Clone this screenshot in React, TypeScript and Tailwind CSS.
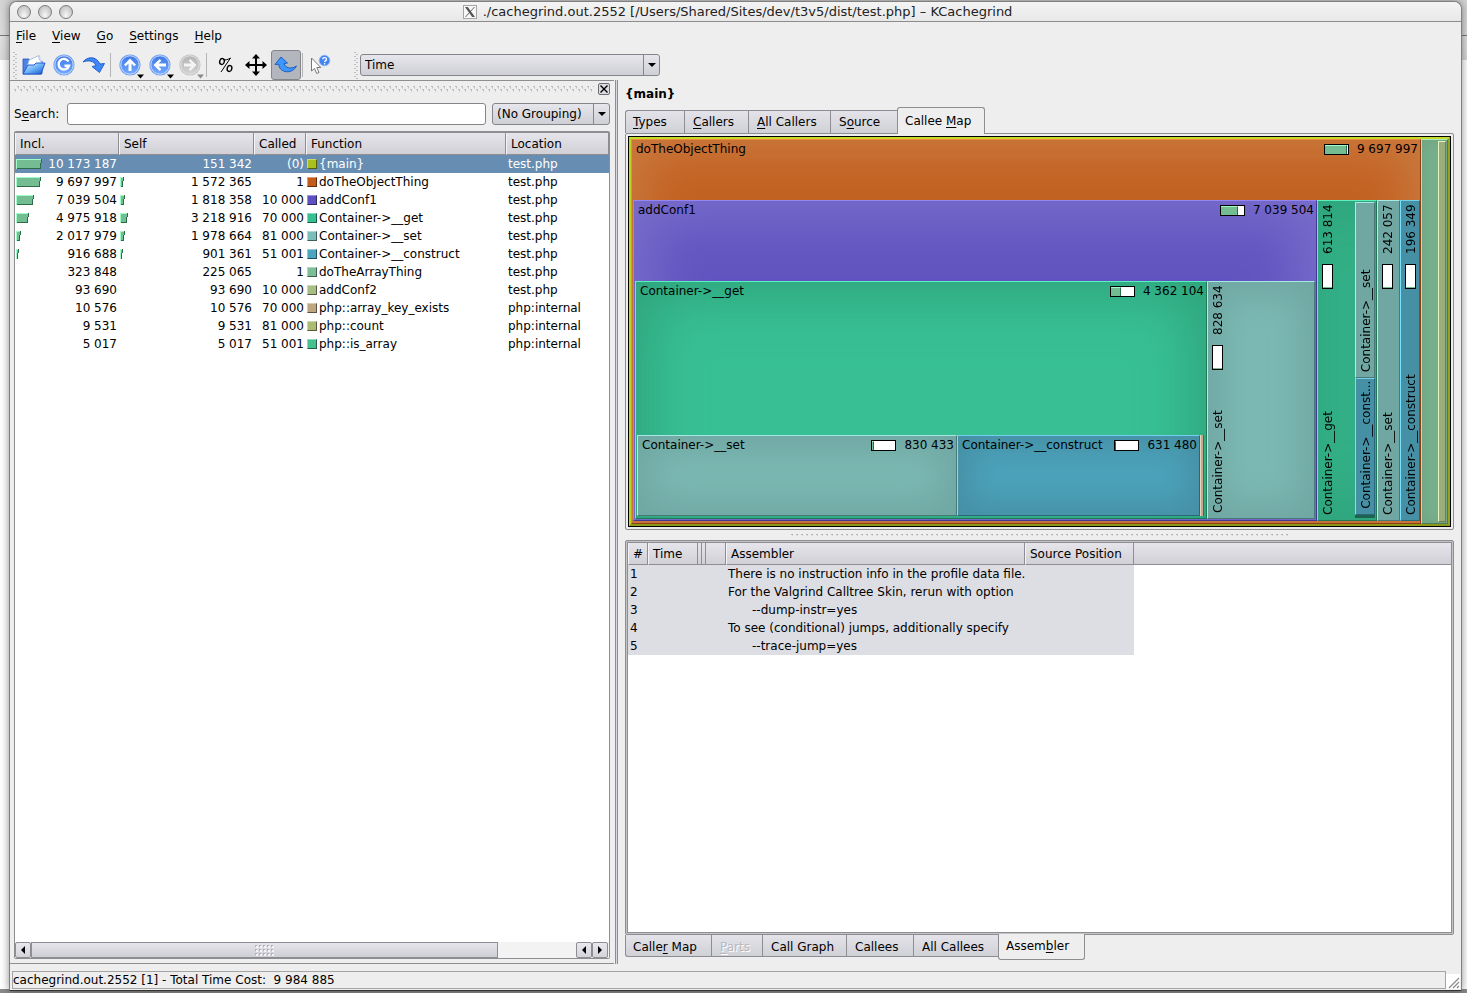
import React, { ReactNode } from "react";

/* ---------- small building blocks ---------- */

function Key({ text, k }: { text: string; k: number }) {
  return (
    <span className="whitespace-pre">
      {text.slice(0, k)}
      <span className="underline underline-offset-2">{text[k]}</span>
      {text.slice(k + 1)}
    </span>
  );
}

function Grip() {
  return (
    <svg className="h-7 w-1 shrink-0" viewBox="0 0 4 28" aria-hidden="true">
      {[1, 5, 9, 13, 17, 21, 25].map((y) => (
        <g key={y}>
          <rect x="0" y={y} width="2" height="1" fill="#bdbdbd" />
          <rect x="2" y={y + 2} width="2" height="1" fill="#bdbdbd" />
        </g>
      ))}
    </svg>
  );
}

function Divider() {
  return <div className="mx-px h-6 w-px shrink-0 border-r border-[#b4b4b4]" />;
}

function ToolButton({
  label,
  children,
  active = false,
  disabled = false,
}: {
  label: string;
  children: ReactNode;
  active?: boolean;
  disabled?: boolean;
}) {
  return (
    <button
      type="button"
      aria-label={label}
      disabled={disabled}
      className={
        active
          ? "flex h-[30px] w-[30px] shrink-0 items-center justify-center rounded-[3px] border border-[#85868c] bg-[#b4b6bd]"
          : "flex h-[30px] w-[30px] shrink-0 items-center justify-center"
      }
    >
      {children}
    </button>
  );
}

function Ball({
  children,
  gray = false,
  menu = false,
}: {
  children: ReactNode;
  gray?: boolean;
  menu?: boolean;
}) {
  const id = gray ? "ballGray" : "ballBlue";
  return (
    <svg width="30" height="30" viewBox="0 0 30 30" aria-hidden="true">
      <defs>
        <linearGradient id={id} x1="0" y1="0" x2="0" y2="1">
          <stop offset="0" stopColor={gray ? "#b4b4b4" : "#3d78e8"} />
          <stop offset="1" stopColor={gray ? "#d2d2d2" : "#74aaff"} />
        </linearGradient>
      </defs>
      <circle cx="15" cy="15" r="10.6" fill={gray ? "#c4c4c4" : "#6f9df0"} />
      <circle cx="15" cy="15" r="9.2" fill={`url(#${id})`} stroke={gray ? "#e2e2e2" : "#c8dcff"} strokeWidth="1" />
      {children}
      {menu && <path d="M22 24.500h7l-3.500 4z" fill={gray ? "#8a8a8a" : "#000"} />}
    </svg>
  );
}

const headCell =
  "border-r border-b border-r-[#8e8e92] border-b-[#8e8e92] border-l border-l-[#f4f4f8] bg-linear-to-b from-[#e5e5eb] to-[#d0d0d6] p-0 pl-1 text-left font-normal";

/* ---------- function list ---------- */

type Fn = {
  incl: string;
  self: string;
  called: string;
  name: string;
  loc: string;
  color: string;
  ib: number;
  sb: number;
};

const functions: Fn[] = [
  { incl: "10 173 187", self: "151 342", called: "(0)", name: "{main}", loc: "test.php", color: "#a8bf1e", ib: 26, sb: 0 },
  { incl: "9 697 997", self: "1 572 365", called: "1", name: "doTheObjectThing", loc: "test.php", color: "#c35c18", ib: 25, sb: 4 },
  { incl: "7 039 504", self: "1 818 358", called: "10 000", name: "addConf1", loc: "test.php", color: "#5f50c2", ib: 18, sb: 5 },
  { incl: "4 975 918", self: "3 218 916", called: "70 000", name: "Container->__get", loc: "test.php", color: "#37be91", ib: 13, sb: 8 },
  { incl: "2 017 979", self: "1 978 664", called: "81 000", name: "Container->__set", loc: "test.php", color: "#7dbebb", ib: 5, sb: 5 },
  { incl: "916 688", self: "901 361", called: "51 001", name: "Container->__construct", loc: "test.php", color: "#4ba5bf", ib: 3, sb: 3 },
  { incl: "323 848", self: "225 065", called: "1", name: "doTheArrayThing", loc: "test.php", color: "#7dbd97", ib: 0, sb: 0 },
  { incl: "93 690", self: "93 690", called: "10 000", name: "addConf2", loc: "test.php", color: "#a9bd87", ib: 0, sb: 0 },
  { incl: "10 576", self: "10 576", called: "70 000", name: "php::array_key_exists", loc: "php:internal", color: "#bfa581", ib: 0, sb: 0 },
  { incl: "9 531", self: "9 531", called: "81 000", name: "php::count", loc: "php:internal", color: "#abbb73", ib: 0, sb: 0 },
  { incl: "5 017", self: "5 017", called: "51 001", name: "php::is_array", loc: "php:internal", color: "#46c08f", ib: 0, sb: 0 },
];

function CostBar({ w }: { w: number }) {
  if (w === 0) return <span />;
  return (
    <svg width={w} height="10" viewBox={`0 0 ${w} 10`} className="shrink-0" aria-hidden="true">
      <path d={`M0 0H${w}V4H${w - 1}V10H0Z`} fill="#74bd93" />
      <path d={`M0 9.5H${w - 1}M${w - 0.5} 0V4M${w - 1.5} 4V10`} stroke="#2f6b4a" strokeWidth="1" fill="none" />
      <path d={`M0 .5H${w - 1}M.5 0V10`} stroke="#9ffcc8" strokeWidth="1" fill="none" />
    </svg>
  );
}

function CostCell({ value, bar }: { value: string; bar: number }) {
  return (
    <td className="p-0">
      <div className="flex items-center justify-between pr-0.5 pl-px">
        <CostBar w={bar} />
        <span>{value}</span>
      </div>
    </td>
  );
}

function FunctionTable() {
  return (
    <table className="w-full table-fixed border-separate border-spacing-0">
      <colgroup>
        <col className="w-[104px]" />
        <col className="w-[135px]" />
        <col className="w-[52px]" />
        <col className="w-[200px]" />
        <col />
      </colgroup>
      <thead>
        <tr className="h-[22px]">
          {["Incl.", "Self", "Called", "Function", "Location"].map((h) => (
            <th key={h} scope="col" className={headCell}>
              {h}
            </th>
          ))}
        </tr>
      </thead>
      <tbody>
        {functions.map((f, i) => (
          <tr key={f.name} className={i === 0 ? "h-[18px] bg-[#678db2] text-white" : "h-[18px]"}>
            <CostCell value={f.incl} bar={f.ib} />
            <CostCell value={f.self} bar={f.sb} />
            <td className="p-0 pr-0.5 text-right">{f.called}</td>
            <td className="p-0">
              <div className="flex items-center gap-0.5 pl-px">
                <span
                  className="h-[10px] w-[10px] shrink-0 border border-t-white/40 border-r-black/50 border-b-black/50 border-l-white/40"
                  style={{ backgroundColor: f.color }}
                />
                {f.name}
              </div>
            </td>
            <td className="p-0 pl-0.5">{f.loc}</td>
          </tr>
        ))}
      </tbody>
    </table>
  );
}

/* ---------- callee map ---------- */

function Meter({ fill }: { fill: number }) {
  return (
    <span className="flex h-[11px] w-[25px] shrink-0 border border-black bg-white">
      <span
        className="border-t border-r border-t-[#9ffcc8] border-r-[#2f6b4a] bg-[#74bd93]"
        style={{ width: fill }}
      />
    </span>
  );
}

function BoxHead({ name, cost, fill }: { name: string; cost: string; fill: number }) {
  return (
    <div className="flex h-[18px] items-center pr-0.5 pl-1 whitespace-nowrap">
      <span className="flex-1">{name}</span>
      <Meter fill={fill} />
      <span className="pl-2">{cost}</span>
    </div>
  );
}

function SideLabel({ name, cost }: { name: string; cost?: string }) {
  return (
    <div className="flex h-full w-5 shrink-0 rotate-180 items-center justify-between overflow-hidden pt-[5px] pb-[3px] leading-[18px] whitespace-nowrap [writing-mode:vertical-rl]">
      <span>{name}</span>
      {cost && (
        <span className="flex items-center gap-[10px]">
          <span className="flex h-[25px] w-[11px] border border-black bg-white">
            <span className="h-full w-full border-t border-t-[#74bd93]" />
          </span>
          <span>{cost}</span>
        </span>
      )}
    </div>
  );
}

const tones = {
  orange:
    "border-t-[#f0883c] border-l-[#f0883c] border-r-[#8c3f10] border-b-[#8c3f10] bg-[#c26222] shadow-[inset_0_0_44px_16px_#ca783e]",
  purple:
    "border-t-[#9488f0] border-l-[#9488f0] border-r-[#41389a] border-b-[#41389a] bg-[#6355c0] shadow-[inset_0_0_50px_20px_#786ccb]",
  green:
    "border-t-[#5cf0bc] border-l-[#5cf0bc] border-r-[#1c7a58] border-b-[#1c7a58] bg-[#38c094] shadow-[inset_0_0_56px_14px_#2fa37c]",
  teal:
    "border-t-[#a8e8e4] border-l-[#a8f0ec] border-r-[#4a7876] border-b-[#4a7876] bg-[#7cb8b3] shadow-[inset_0_0_32px_14px_#70a7a3]",
  blue:
    "border-t-[#74d0ec] border-l-[#7ce0fc] border-r-[#2c667c] border-b-[#2c667c] bg-[#4ba2ba] shadow-[inset_0_0_28px_12px_#4690a6]",
  sage:
    "border-t-[#a4e8bc] border-l-[#a4e8bc] border-r-[#4c7c5c] border-b-[#4c7c5c] bg-[#76b08c] shadow-[inset_0_0_12px_2px_#72a384]",
  khaki: "border-t-[#e4f4bc] border-l-[#e4f4bc] border-r-[#707c54] border-b-[#707c54] bg-[#9cac7c]",
};

function Box({
  tone,
  className,
  children,
}: {
  tone: keyof typeof tones;
  className: string;
  children?: ReactNode;
}) {
  return <div className={`min-h-0 min-w-0 border ${tones[tone]} ${className}`}>{children}</div>;
}

function CalleeMap() {
  return (
    <div className="flex min-h-0 flex-1 border border-black">
      <div className="flex min-h-0 flex-1 border-2 border-t-[#c4dc28] border-r-[#96a41c] border-b-[#8c9818] border-l-[#c0d424]">
        <Box tone="orange" className="flex flex-1 flex-col">
          <div className="h-[60px] shrink-0">
            <BoxHead name="doTheObjectThing" cost="9 697 997" fill={22} />
          </div>
          <div className="flex min-h-0 flex-1 pb-0.5 pl-px">
            <Box tone="purple" className="flex flex-1 flex-col">
              <div className="h-20 shrink-0">
                <BoxHead name="addConf1" cost="7 039 504" fill={17} />
              </div>
              <div className="flex min-h-0 flex-1 pr-px pb-px pl-px">
                <Box tone="green" className="flex flex-1 flex-col">
                  <div className="min-h-0 flex-1">
                    <BoxHead name="Container->__get" cost="4 362 104" fill={10} />
                  </div>
                  <div className="flex h-[83px] shrink-0 pr-0.5 pb-0.5 pl-px">
                    <Box tone="teal" className="flex-1">
                      <BoxHead name="Container->__set" cost="830 433" fill={2} />
                    </Box>
                    <Box tone="blue" className="w-[243px] shrink-0">
                      <BoxHead name="Container->__construct" cost="631 480" fill={1} />
                    </Box>
                    <div className="w-1 shrink-0 border-x border-l-[#e8d4bc] border-r-[#6c5844] bg-[#c4aa8c]" />
                  </div>
                </Box>
                <Box tone="teal" className="flex w-[108px] shrink-0">
                  <SideLabel name="Container->__set" cost="828 634" />
                </Box>
              </div>
            </Box>
            <Box tone="green" className="flex w-[60px] shrink-0 justify-between pr-px">
              <SideLabel name="Container->__get" cost="613 814" />
              <div className="flex w-5 shrink-0 flex-col pt-px pb-0.5">
                <Box tone="teal" className="flex-[177]">
                  <SideLabel name="Container->__set" />
                </Box>
                <Box tone="blue" className="flex-[137]">
                  <SideLabel name="Container->__const..." />
                </Box>
                <div className="h-[3px] bg-[#1c6450]" />
              </div>
            </Box>
            <Box tone="teal" className="flex w-[23px] shrink-0">
              <SideLabel name="Container->__set" cost="242 057" />
            </Box>
            <Box tone="blue" className="flex w-5 shrink-0">
              <SideLabel name="Container->__construct" cost="196 349" />
            </Box>
          </div>
        </Box>
        <Box tone="sage" className="flex w-[27px] shrink-0 justify-end py-px pr-px">
          <Box tone="khaki" className="w-2" />
        </Box>
      </div>
    </div>
  );
}

/* ---------- tabs ---------- */

type Tab = { text: string; k: number; w: string; state?: "on" | "off" };

const topTabs: Tab[] = [
  { text: "Types", k: 0, w: "w-[59px]" },
  { text: "Callers", k: 0, w: "w-16" },
  { text: "All Callers", k: 0, w: "w-[82px]" },
  { text: "Source", k: 1, w: "w-[67px]" },
  { text: "Callee Map", k: 7, w: "w-[88px]", state: "on" },
];

const bottomTabs: Tab[] = [
  { text: "Caller Map", k: 5, w: "w-[86px]" },
  { text: "Parts", k: 0, w: "w-[51px]", state: "off" },
  { text: "Call Graph", k: -1, w: "w-[84px]" },
  { text: "Callees", k: -1, w: "w-[67px]" },
  { text: "All Callees", k: -1, w: "w-[85px]" },
  { text: "Assembler", k: 5, w: "w-[87px]", state: "on" },
];

function TopTabs() {
  return (
    <div role="tablist" className="flex h-[26px] shrink-0 items-end">
      {topTabs.map((t, i) => (
        <button
          key={t.text}
          type="button"
          role="tab"
          aria-selected={t.state === "on"}
          className={`${t.w} shrink-0 text-left ${
            t.state === "on"
              ? "relative -mb-px h-[27px] rounded-t-[3px] border-x border-t border-[#8e8e92] bg-[#eeeeee] pl-[7px]"
              : `h-[23px] border-t border-l border-[#8e8e92] bg-linear-to-b from-[#e3e3e9] to-[#d0d1d7] ${i === 0 ? "rounded-tl-[3px] pl-[7px]" : "pl-2"}`
          }`}
        >
          <Key text={t.text} k={t.k} />
        </button>
      ))}
    </div>
  );
}

function BottomTabs() {
  return (
    <div role="tablist" className="flex h-[29px] shrink-0 items-start">
      {bottomTabs.map((t, i) => (
        <button
          key={t.text}
          type="button"
          role="tab"
          disabled={t.state === "off"}
          aria-selected={t.state === "on"}
          className={`${t.w} shrink-0 text-left ${
            t.state === "on"
              ? "relative -mt-px h-[26px] rounded-b-[3px] border-x border-b border-[#8e8e92] bg-[#eeeeee] pb-0.5 pl-[7px]"
              : `h-[22px] border-b border-l border-[#8e8e92] bg-linear-to-b from-[#e3e3e9] to-[#d0d1d7] pt-0.5 ${i === 0 ? "rounded-bl-[3px] pl-[7px]" : "pl-2"}`
          } ${t.state === "off" ? "text-[#b9b9bd] [text-shadow:1px_1px_0_#fff]" : ""}`}
        >
          {t.k < 0 ? t.text : <Key text={t.text} k={t.k} />}
        </button>
      ))}
    </div>
  );
}

/* ---------- assembler table ---------- */

const asm = [
  { text: "There is no instruction info in the profile data file.", indent: false },
  { text: "For the Valgrind Calltree Skin, rerun with option", indent: false },
  { text: "--dump-instr=yes", indent: true },
  { text: "To see (conditional) jumps, additionally specify", indent: false },
  { text: "--trace-jump=yes", indent: true },
];

function AssemblerTable() {
  return (
    <table className="w-full table-fixed border-separate border-spacing-0">
      <colgroup>
        <col className="w-5" />
        <col className="w-[50px]" />
        <col className="w-1" />
        <col className="w-1" />
        <col className="w-5" />
        <col className="w-[299px]" />
        <col className="w-[109px]" />
        <col />
      </colgroup>
      <thead>
        <tr className="h-[22px]">
          <th scope="col" className={headCell}>#</th>
          <th scope="col" className={headCell}>Time</th>
          {["a", "b", "c"].map((n) => (
            <td key={n} className="border-r border-b border-[#8e8e92] bg-linear-to-b from-[#e5e5eb] to-[#d0d0d6] p-0" />
          ))}
          <th scope="col" className={headCell}>Assembler</th>
          <th scope="col" className={`${headCell} whitespace-nowrap`}>Source Position</th>
          <td className="border-b border-[#8e8e92] bg-linear-to-b from-[#e5e5eb] to-[#d0d0d6] p-0" />
        </tr>
      </thead>
      <tbody>
        {asm.map((r, i) => (
          <tr key={i} className="h-[18px]">
            <td className="bg-[#dddee4] p-0 pl-0.5">{i + 1}</td>
            <td colSpan={4} className="bg-[#dddee4] p-0" />
            <td className={`bg-[#dddee4] p-0 whitespace-nowrap ${r.indent ? "pl-[26px]" : "pl-0.5"}`}>{r.text}</td>
            <td className="bg-[#dddee4] p-0" />
            <td className="p-0" />
          </tr>
        ))}
      </tbody>
    </table>
  );
}

/* ---------- scroll bar ---------- */

function ScrollArrow({ d, label }: { d: string; label: string }) {
  return (
    <button
      type="button"
      aria-label={label}
      className="flex h-4 w-4 shrink-0 items-center justify-center rounded-[2px] border border-[#8e8e92] bg-linear-to-b from-[#e8e8ee] to-[#d4d4da]"
    >
      <svg width="6" height="8" viewBox="0 0 6 8" aria-hidden="true">
        <path d={d} fill="#000" />
      </svg>
    </button>
  );
}

function ScrollBar() {
  return (
    <div className="flex h-4 shrink-0 bg-[#f3f3f3] pr-px">
      <ScrollArrow d="M5 0v8L1 4z" label="Scroll left" />
      <div className="flex flex-[467] items-center justify-center border border-[#8e8e92] bg-linear-to-b from-[#e5e5eb] to-[#cecfd5]">
        <svg width="19" height="11" viewBox="0 0 19 11" aria-hidden="true">
          {[0, 4, 8].map((y) =>
            [0, 4, 8, 12, 16].map((x) => (
              <g key={`${x}-${y}`}>
                <rect x={x + 1} y={y + 1} width="2" height="2" fill="#f4f4f8" />
                <rect x={x} y={y} width="2" height="1" fill="#b0b0b6" />
                <rect x={x} y={y} width="1" height="2" fill="#b0b0b6" />
              </g>
            )),
          )}
        </svg>
      </div>
      <div className="flex-[78]" />
      <ScrollArrow d="M5 0v8L1 4z" label="Scroll left" />
      <ScrollArrow d="M1 0v8l4-4z" label="Scroll right" />
    </div>
  );
}

/* ---------- combo box ---------- */

function Combo({ label, value, className }: { label: string; value: string; className: string }) {
  return (
    <div
      className={`flex h-[22px] shrink-0 items-stretch rounded-[3px] border border-[#85868c] bg-linear-to-b from-[#e6e6ec] to-[#cfd0d6] ${className}`}
    >
      <select
        aria-label={label}
        className="min-w-0 flex-1 appearance-none border-r border-[#85868c] bg-transparent pl-1 leading-4 outline-none"
      >
        <option>{value}</option>
      </select>
      <span className="flex w-[15px] shrink-0 items-center justify-center">
        <svg width="8" height="4" viewBox="0 0 8 4" aria-hidden="true">
          <path d="M0 0h8L4 4z" fill="#000" />
        </svg>
      </span>
    </div>
  );
}

/* ---------- window parts ---------- */

function TitleBar() {
  return (
    <header className="flex h-5 shrink-0 items-center rounded-t-[7px] border-b border-[#8c8c8c] bg-linear-to-b from-[#f4f4f4] to-[#e8e8e8]">
      <div className="flex w-[68px] gap-[7px] pl-[7px]">
        {["Close", "Minimize", "Zoom"].map((n) => (
          <button
            key={n}
            type="button"
            aria-label={n}
            className="h-[14px] w-[14px] rounded-full border border-[#7c7c7c] bg-radial-[at_50%_80%] from-[#f8f8f8] to-[#b4b4b4]"
          />
        ))}
      </div>
      <div className="flex flex-1 items-center justify-center gap-[6px] pr-16 text-[13px] whitespace-nowrap text-[#222]">
        <svg width="14" height="14" viewBox="0 0 14 14" aria-hidden="true">
          <rect x=".5" y=".5" width="13" height="13" fill="#f8f8f8" stroke="#a4a4a4" />
          <path d="M2 2h2.800L12 12H9.200z" fill="#555" />
          <path d="M11.500 2L2.500 12" stroke="#555" strokeWidth=".9" />
        </svg>
        <h1>./cachegrind.out.2552 [/Users/Shared/Sites/dev/t3v5/dist/test.php] – KCachegrind</h1>
      </div>
    </header>
  );
}

function MenuBar() {
  return (
    <nav className="flex h-[27px] shrink-0 items-center gap-4 pl-1.5">
      {["File", "View", "Go", "Settings", "Help"].map((m) => (
        <button key={m} type="button">
          <Key text={m} k={0} />
        </button>
      ))}
    </nav>
  );
}

function ToolBar() {
  return (
    <div className="flex h-[31px] shrink-0 items-center pl-[3px]">
      <Grip />
      <div className="flex items-center pl-0.5">
        <ToolButton label="Open">
          <svg width="24" height="24" viewBox="0 0 24 24" aria-hidden="true">
            <defs>
              <linearGradient id="folder" x1="0" y1="0" x2="1" y2="1">
                <stop offset="0" stopColor="#e0f4ff" />
                <stop offset=".5" stopColor="#6cb4f8" />
                <stop offset="1" stopColor="#1450d0" />
              </linearGradient>
            </defs>
            <path d="M1 8V6h6l2 2h11v13H1z" fill="#4c84e4" stroke="#2450b8" strokeWidth=".8" />
            <path d="M5 14l2-7 10-4.500 4 11z" fill="#fff" stroke="#9cb4d8" strokeWidth=".8" />
            <path d="M17 2.500l0 4 3.500 3" fill="#e4ecf8" stroke="#9cb4d8" strokeWidth=".8" />
            <path d="M1 21l5-9h6l2-2h9l-4 11z" fill="url(#folder)" stroke="#1c50c8" strokeWidth=".9" />
          </svg>
        </ToolButton>
        <ToolButton label="Reload">
          <Ball>
            <path d="M19.500 11.500A5.300 5.300 0 1 0 20 15.800H15.500" fill="none" stroke="#fff" strokeWidth="2.400" />
          </Ball>
        </ToolButton>
        <ToolButton label="Redo">
          <svg width="24" height="18" viewBox="0 0 24 18" aria-hidden="true">
            <path
              d="M1 6C5 .500 14-.500 18 8l4.500-.500-5 9-7.500-6 4-.800C12 4.500 6 4 1 6z"
              fill="#3d88f4"
              stroke="#1c58cc"
              strokeWidth=".9"
              strokeLinejoin="round"
            />
          </svg>
        </ToolButton>
        <Divider />
        <div className="w-[3px]" />
        <ToolButton label="Up">
          <Ball menu>
            <path d="M15 8.500l6 6.200-1.800 1.600-2.700-2.700V21h-3v-7.400l-2.700 2.700L9 14.700z" fill="#fff" />
          </Ball>
        </ToolButton>
        <ToolButton label="Back">
          <Ball menu>
            <path d="M8.500 15l6.200-6 1.600 1.800-2.700 2.700H21v3h-7.400l2.700 2.700-1.600 1.800z" fill="#fff" />
          </Ball>
        </ToolButton>
        <ToolButton label="Forward" disabled>
          <Ball menu gray>
            <path d="M21.500 15l-6.200-6-1.600 1.800 2.700 2.700H9v3h7.400l-2.700 2.700 1.600 1.800z" fill="#f4f4f4" />
          </Ball>
        </ToolButton>
        <Divider />
        <div className="w-[3px]" />
        <ToolButton label="Relative cost">
          <svg width="16" height="16" viewBox="0 0 16 16" fill="none" stroke="#000" aria-hidden="true">
            <ellipse cx="4" cy="4.500" rx="2.300" ry="3" strokeWidth="1.400" transform="rotate(15 4 4.500)" />
            <ellipse cx="11.500" cy="11.500" rx="2.300" ry="3" strokeWidth="1.400" transform="rotate(15 11.500 11.500)" />
            <path d="M12.500 1L3 15M5 2.500c2.500 1 5 0 7.500-1.500" strokeWidth="1" />
          </svg>
        </ToolButton>
        <ToolButton label="Percentage relative to parent">
          <svg width="22" height="22" viewBox="0 0 22 22" aria-hidden="true">
            <path
              d="M11 0l4 4.500h-3V10h5.500V7L22 11l-4.500 4v-3H12v5.500h3L11 22l-4-4.500h3V12H4.500v3L0 11l4.500-4v3H10V4.500H7z"
              fill="#000"
            />
          </svg>
        </ToolButton>
        <ToolButton label="Skip cycle detection" active>
          <svg width="24" height="18" viewBox="0 0 24 18" aria-hidden="true">
            <path
              d="M1 8.500L7 1l6.500 6-3.500.500c1 4.500 7 6 12.500 2.500C20 15 15 16.500 11 15.500 7 14.500 5 12 4.800 8.300z"
              fill="#3d98fc"
              stroke="#1454c4"
              strokeWidth=".9"
              strokeLinejoin="round"
            />
          </svg>
        </ToolButton>
        <Divider />
        <div className="w-px" />
        <ToolButton label="What's this?">
          <svg width="22" height="22" viewBox="0 0 22 22" aria-hidden="true">
            <circle cx="15.500" cy="6.500" r="5.300" fill="#4484f0" stroke="#8cb4fc" strokeWidth=".8" />
            <path d="M13.600 5.300c.2-2.400 4-2.200 3.900.100 0 1.200-1.900 1.300-1.900 2.700M15.600 9v1.400" fill="none" stroke="#fff" strokeWidth="1.300" />
            <path d="M2.500 4v13l3-2.500 2.200 5 2.300-1-2.200-5h4z" fill="#fff" stroke="#777" strokeWidth="1" />
          </svg>
        </ToolButton>
      </div>
      <div className="w-[19px] shrink-0" />
      <Grip />
      <Combo label="Event type" value="Time" className="ml-0.5 w-[300px]" />
    </div>
  );
}

function Dock() {
  return (
    <section className="flex w-[608px] shrink-0">
      <div className="flex min-w-0 flex-1 flex-col border-t border-b border-[#8e8e92] pr-1 pb-1 pl-1">
        <div className="flex h-4 shrink-0 items-center gap-1">
          <svg className="h-[6px] min-w-0 flex-1" aria-hidden="true">
            <defs>
              <pattern id="dockDots" width="6" height="6" patternUnits="userSpaceOnUse">
                <path d="M0 3.500h2M1.500 3.500v2M3 .500h2M4.500 .500v2" stroke="#bcbcbc" strokeWidth="1" />
              </pattern>
            </defs>
            <rect width="100%" height="6" fill="url(#dockDots)" />
          </svg>
          <button
            type="button"
            aria-label="Close dock"
            className="flex h-3 w-3 shrink-0 items-center justify-center rounded-[2px] border border-[#6c6c72] bg-[#dcdce2]"
          >
            <svg width="8" height="8" viewBox="0 0 8 8" aria-hidden="true">
              <path d="M.500.500l7 7M7.500.500l-7 7" stroke="#000" strokeWidth="1.400" />
            </svg>
          </button>
        </div>
        <div className="mt-[6px] flex h-[22px] shrink-0 items-center">
          <label htmlFor="search" className="w-[53px] shrink-0">
            <Key text="Search:" k={1} />
          </label>
          <input
            id="search"
            type="text"
            className="h-[22px] min-w-0 flex-1 rounded-[3px] border border-[#85868c] bg-white px-1 outline-none"
          />
          <Combo label="Grouping" value="(No Grouping)" className="ml-[6px] w-[118px]" />
        </div>
        <div className="mt-[6px] flex min-h-0 flex-1 flex-col rounded-[2px] border border-t-2 border-[#8e8e92] bg-white">
          <FunctionTable />
          <div className="flex-1" />
          <ScrollBar />
        </div>
      </div>
      <div className="ml-px w-[3px] shrink-0 border-x border-[#8e8e92] bg-[#d8d8e0]" />
    </section>
  );
}

function Details() {
  return (
    <section className="flex min-w-0 flex-1 flex-col pr-[7px] pl-[7px]">
      <h2 className="flex h-[27px] shrink-0 items-center font-bold">{"{main}"}</h2>
      <TopTabs />
      <div className="flex min-h-0 flex-1 rounded-[2px] border border-[#8e8e92] p-0.5">
        <CalleeMap />
      </div>
      <div className="flex h-[10px] shrink-0 items-center justify-center">
        <svg className="h-1 w-[498px]" aria-hidden="true">
          <defs>
            <pattern id="splitDots" width="5" height="4" patternUnits="userSpaceOnUse">
              <path d="M0 1.500h2M1.500 1.500v1" stroke="#b4b4b4" strokeWidth="1" />
            </pattern>
          </defs>
          <rect width="100%" height="4" fill="url(#splitDots)" />
        </svg>
      </div>
      <div className="flex min-h-0 flex-1 flex-col rounded-[2px] border border-[#8e8e92] bg-[#c4c4c4] p-px">
        <div className="min-h-0 flex-1 overflow-hidden border border-[#8e8e92] bg-white">
          <AssemblerTable />
        </div>
      </div>
      <BottomTabs />
    </section>
  );
}

function StatusBar() {
  return (
    <footer className="flex shrink-0 pt-[7px] pr-px pb-px pl-0.5">
      <div className="flex h-[18px] min-w-0 flex-1 items-center border border-[#a4a4a4]">
        {"cachegrind.out.2552 [1] - Total Time Cost:\u00a0 9 984 885"}
      </div>
      <svg width="14" height="15" viewBox="0 0 14 15" className="mt-[3px] shrink-0" aria-hidden="true">
        <rect width="14" height="15" fill="#fff" />
        <path d="M3 14L13 4M7 14l6-6M11 14l2-2" stroke="#8a8a8a" strokeWidth="1.200" />
      </svg>
    </footer>
  );
}

export default function App() {
  return (
    <div className="flex h-screen flex-col bg-[linear-gradient(#d4d4d4_0,#dcdcdc_35px,#777_35px,#777_36px,#e0e0e0_36px,#d8d8d8_60px,#fff_60px,#fff_calc(100%-4px),#8a8a8a_calc(100%-4px))] pt-px pr-[5px] pb-0.5 pl-[9px] font-['DejaVu_Sans',sans-serif] text-[12px] leading-4 text-black">
      <main className="flex min-h-0 flex-1 flex-col rounded-t-[8px] border border-[#808080] border-b-[#333] bg-[#eeeeee] shadow-[0_0_8px_rgba(0,0,0,0.45)]">
        <TitleBar />
        <MenuBar />
        <ToolBar />
        <div className="flex min-h-0 flex-1">
          <Dock />
          <Details />
        </div>
        <StatusBar />
      </main>
    </div>
  );
}
